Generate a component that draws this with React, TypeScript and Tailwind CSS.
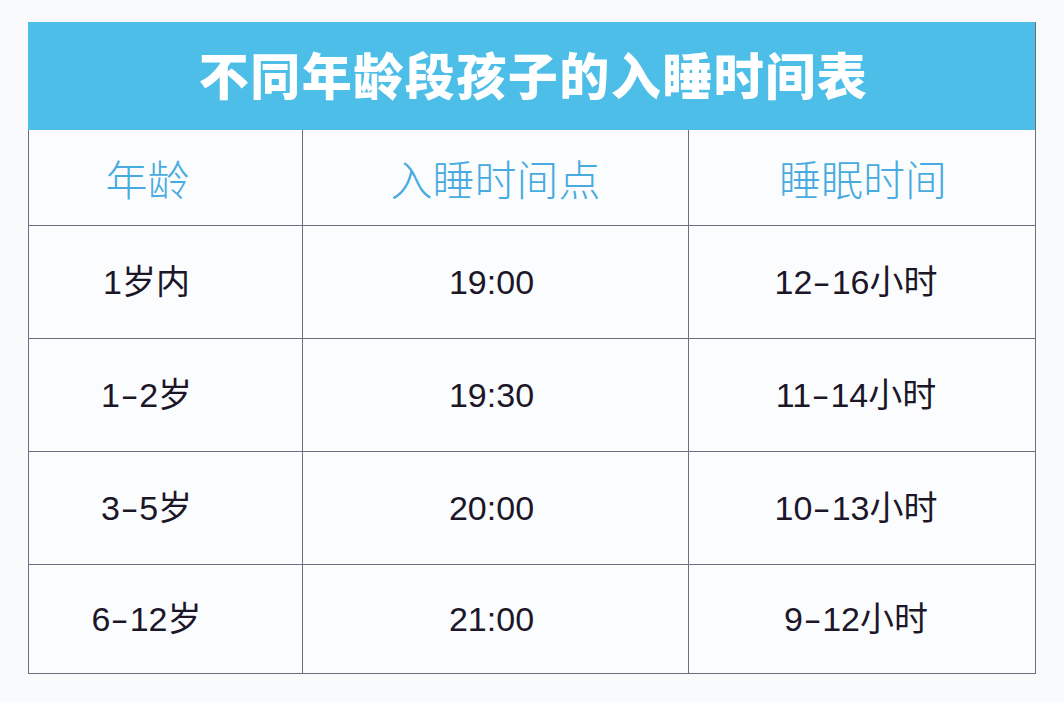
const rows = [
  { age: '1岁内', bed: '19:00', sleep: ['12', '16'] },
  { age: ['1', '2'], bed: '19:30', sleep: ['11', '14'] },
  { age: ['3', '5'], bed: '20:00', sleep: ['10', '13'] },
  { age: ['6', '12'], bed: '21:00', sleep: ['9', '12'] },
]

function Range({ parts, unit }: { parts: string[]; unit: string }) {
  return (
    <>
      {parts[0]}
      <span className="mx-[4px] inline-block scale-x-[1.6]">-</span>
      {parts[1]}
      {unit}
    </>
  )
}

export default function App() {
  return (
    <div className="h-[702px] w-[1064px] bg-[#f9fafc] pl-[28px] pt-[22px]">
      <div className="w-[1008px] border-b border-r border-[#6f6c80]">
        <div className="flex h-[108px] items-center justify-center bg-[#4dbee8] pb-[6px]">
          <h1 className="pl-[4px] font-['Noto_Sans_CJK_SC',sans-serif] text-[50px] font-black leading-none tracking-[1.5px] text-white">
            不同年龄段孩子的入睡时间表
          </h1>
        </div>
        <div className="grid grid-cols-[274px_386px_348px] border-l border-[#6f6c80] bg-[#fbfcfe] font-['Noto_Sans_CJK_SC',sans-serif] text-[42px] font-light leading-none text-[#47abdf]">
          <div className="flex h-[95px] items-center justify-center border-r border-[#6f6c80] pr-[36px]">年龄</div>
          <div className="flex h-[95px] items-center justify-center border-r border-[#6f6c80]">入睡时间点</div>
          <div className="flex h-[95px] items-center justify-center">睡眠时间</div>
        </div>
        {rows.map((r, i) => (
          <div
            key={i}
            className={`grid grid-cols-[274px_386px_348px] border-l border-t border-[#6f6c80] bg-[#fbfcfe] font-['Liberation_Sans','Noto_Sans_CJK_SC',sans-serif] text-[34px] leading-none text-[#1b1729] ${
              i === 3 ? 'h-[109px]' : 'h-[113px]'
            }`}
          >
            <div className="flex items-center justify-center border-r border-[#6f6c80] pr-[38px]">
              {typeof r.age === 'string' ? r.age : <Range parts={r.age} unit="岁" />}
            </div>
            <div className="flex items-center justify-center border-r border-[#6f6c80] pr-[8px]">{r.bed}</div>
            <div className="flex items-center justify-center pr-[14px]">
              <Range parts={r.sleep} unit="小时" />
            </div>
          </div>
        ))}
      </div>
    </div>
  )
}
